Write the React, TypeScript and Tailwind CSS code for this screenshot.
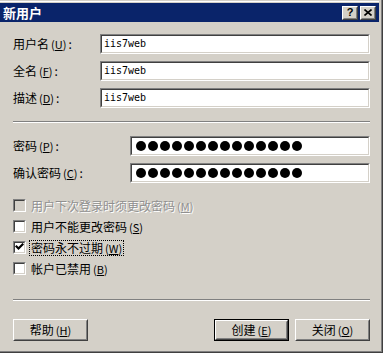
import type { ReactNode } from 'react'

function Mn({ text, k, colon = false }: { text: string; k: string; colon?: boolean }) {
  return (
    <span className="whitespace-nowrap">
      {text}
      <span className="ml-[2px] text-[11px]">
        (<span className="underline underline-offset-1">{k}</span>)
      </span>
      {colon && <span className="ml-[2px]">:</span>}
    </span>
  )
}

function Sunken({ children, className = '' }: { children?: ReactNode; className?: string }) {
  return (
    <div className={`border border-t-[#808080] border-l-[#808080] border-b-white border-r-white ${className}`}>
      <div className="flex h-full items-center border border-t-[#404040] border-l-[#404040] border-b-[#d4d0c8] border-r-[#d4d0c8] bg-white">
        {children}
      </div>
    </div>
  )
}

function Raised({ children, className = '' }: { children?: ReactNode; className?: string }) {
  return (
    <div className={`border border-t-white border-l-white border-b-[#404040] border-r-[#404040] ${className}`}>
      <div className="flex h-full items-center justify-center border border-t-[#d4d0c8] border-l-[#d4d0c8] border-b-[#808080] border-r-[#808080] bg-[#d4d0c8]">
        {children}
      </div>
    </div>
  )
}

function TextRow({ label, value }: { label: ReactNode; value: string }) {
  return (
    <div className="flex h-[20px] items-center">
      <div className="w-[87px]">{label}</div>
      <Sunken className="h-[20px] w-[270px]">
        <span className="pl-[2px] font-['DejaVu_Sans_Mono',monospace] text-[10px]">{value}</span>
      </Sunken>
    </div>
  )
}

function PwRow({ label }: { label: ReactNode }) {
  return (
    <div className="flex h-[20px] items-center">
      <div className="w-[117px]">{label}</div>
      <Sunken className="h-[20px] w-[240px]">
        <div className="flex gap-[2px] pl-[4px]">
          {Array.from({ length: 14 }).map((_, i) => (
            <div key={i} className="h-[10px] w-[10px] rounded-full bg-black" />
          ))}
        </div>
      </Sunken>
    </div>
  )
}

function Check({ checked = false, disabled = false }: { checked?: boolean; disabled?: boolean }) {
  return (
    <div className="h-[13px] w-[13px] shrink-0 border border-t-[#808080] border-l-[#808080] border-b-white border-r-white">
      <div
        className={`h-full border border-t-[#404040] border-l-[#404040] border-b-[#d4d0c8] border-r-[#d4d0c8] ${
          disabled ? 'bg-[#d4d0c8]' : 'bg-white'
        }`}
      >
        {checked && (
          <svg width="9" height="9" viewBox="0 0 9 9">
            <path d="M1.5 3.5 L3.5 5.5 L7.5 1.5" fill="none" stroke="black" strokeWidth="2.2" strokeLinecap="square" />
          </svg>
        )}
      </div>
    </div>
  )
}

function Separator() {
  return (
    <div>
      <div className="h-px bg-[#808080]" />
      <div className="h-px bg-white" />
    </div>
  )
}

export default function App() {
  return (
    <div className="h-[354px] w-[384px] bg-white text-[12px] leading-none text-black font-['Noto_Sans_CJK_SC','Liberation_Sans',sans-serif]">
      <div className="h-[353px] w-[383px] border-r border-b border-[#404040] bg-[#d4d0c8]">
        <div className="flex h-full flex-col border-r border-b border-[#808080] pr-[2px]">
          <div className="h-px" />
          <div className="h-px bg-white" />
          <div className="h-px" />
          <div className="flex h-[19px] items-center justify-between bg-[#0a246a] pl-[3px] pr-[3px]">
            <span className="text-[13px] font-bold text-white">新用户</span>
            <div className="flex gap-[2px]">
              <Raised className="h-[14px] w-[16px]">
                <span className="font-['Liberation_Sans',sans-serif] text-[11px] font-bold">?</span>
              </Raised>
              <Raised className="h-[14px] w-[16px]">
                <svg width="8" height="7" viewBox="0 0 8 7">
                  <path d="M0.5 0.5 L7.5 6.5 M7.5 0.5 L0.5 6.5" stroke="black" strokeWidth="1.6" />
                </svg>
              </Raised>
            </div>
          </div>

          <div className="flex flex-col pl-[13px] pr-[9px]">
            <div className="mt-[12px] flex flex-col gap-[7px]">
              <TextRow label={<Mn text="用户名" k="U" colon />} value="iis7web" />
              <TextRow label={<Mn text="全名" k="F" colon />} value="iis7web" />
              <TextRow label={<Mn text="描述" k="D" colon />} value="iis7web" />
            </div>

            <div className="mt-[13px]">
              <Separator />
            </div>

            <div className="mt-[13px] flex flex-col gap-[7px]">
              <PwRow label={<Mn text="密码" k="P" colon />} />
              <PwRow label={<Mn text="确认密码" k="C" colon />} />
            </div>

            <div className="mt-[16px] flex flex-col gap-[8px]">
              <div className="flex h-[13px] items-center gap-[5px]">
                <Check disabled />
                <span className="text-[#909090] [text-shadow:1px_1px_0_#fff]">
                  <Mn text="用户下次登录时须更改密码" k="M" />
                </span>
              </div>
              <div className="flex h-[13px] items-center gap-[5px]">
                <Check />
                <Mn text="用户不能更改密码" k="S" />
              </div>
              <div className="flex h-[13px] items-center gap-[3px]">
                <Check checked />
                <span className="border border-dotted border-black px-px py-px">
                  <Mn text="密码永不过期" k="W" />
                </span>
              </div>
              <div className="flex h-[13px] items-center gap-[5px]">
                <Check />
                <Mn text="帐户已禁用" k="B" />
              </div>
            </div>

            <div className="mt-[24px]">
              <Separator />
            </div>

            <div className="mt-[18px] flex justify-between">
              <Raised className="h-[22px] w-[75px]">
                <Mn text="帮助" k="H" />
              </Raised>
              <div className="flex gap-[6px]">
                <div className="h-[22px] w-[75px] border border-black">
                  <Raised className="h-full w-full">
                    <Mn text="创建" k="E" />
                  </Raised>
                </div>
                <Raised className="h-[22px] w-[75px]">
                  <Mn text="关闭" k="O" />
                </Raised>
              </div>
            </div>
          </div>
        </div>
      </div>
    </div>
  )
}
